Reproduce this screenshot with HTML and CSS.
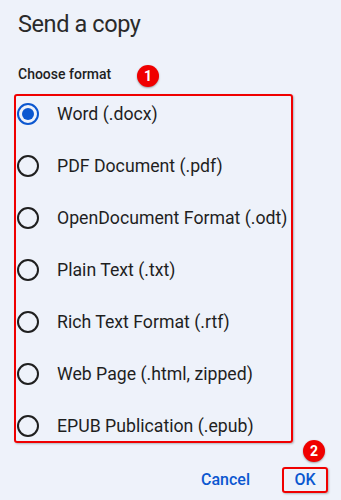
FILE: index.html
```html
<!DOCTYPE html>
<html>
<head>
<meta charset="utf-8">
<link rel="stylesheet" href="styles.css">
</head>
<body>
<div class="dialog">
  <h1 class="title">Send a copy</h1>
  <div class="label-row">
    <span class="label">Choose format</span>
    <span class="badge badge-1">1</span>
  </div>
  <div class="options">
    <div class="option"><span class="radio checked"></span><span class="opt-text">Word (.docx)</span></div>
    <div class="option"><span class="radio"></span><span class="opt-text">PDF Document (.pdf)</span></div>
    <div class="option"><span class="radio"></span><span class="opt-text">OpenDocument Format (.odt)</span></div>
    <div class="option"><span class="radio"></span><span class="opt-text">Plain Text (.txt)</span></div>
    <div class="option"><span class="radio"></span><span class="opt-text">Rich Text Format (.rtf)</span></div>
    <div class="option"><span class="radio"></span><span class="opt-text">Web Page (.html, zipped)</span></div>
    <div class="option"><span class="radio"></span><span class="opt-text">EPUB Publication (.epub)</span></div>
  </div>
  <div class="actions">
    <span class="btn">Cancel</span>
    <span class="btn btn-ok">OK<span class="badge badge-2">2</span></span>
  </div>
</div>
</body>
</html>
```
FILE: styles.css
```css
html, body {
  margin: 0;
  padding: 0;
  background: #eef2fa;
}
body {
  width: 341px;
  height: 500px;
  overflow: hidden;
  font-family: Roboto, "Noto Sans", sans-serif;
  color: #1f1f1f;
}
.dialog {
  padding: 7px 0 0 0;
}
.title {
  margin: 0 0 0 18px;
  font-size: 23.5px;
  letter-spacing: -0.4px;
  line-height: 34px;
  font-weight: 400;
  color: #2a2a2a;
}
.label-row {
  position: relative;
  margin: 23px 0 0 18px;
  height: 20px;
}
.label {
  font-size: 14px;
  line-height: 20px;
  font-weight: 500;
  color: #1f1f1f;
}
.badge {
  position: absolute;
  width: 22px;
  height: 22px;
  border-radius: 50%;
  background: #f00000;
  color: #fff;
  font-size: 14px;
  font-weight: 700;
  line-height: 22px;
  text-align: center;
  box-shadow: 0 1px 2px rgba(0,0,0,0.35);
}
.badge-1 {
  left: 119px;
  top: 1px;
}
.options {
  margin: 10px 0 0 14px;
  width: 274px;
  border: 2px solid #f00000;
  border-radius: 3px;
  box-shadow: 1px 1px 2px rgba(0,0,0,0.25);
  padding: 3px 0 0 1px;
  display: flex;
  flex-direction: column;
  gap: 22px;
  height: 342px;
  box-sizing: content-box;
}
.option {
  display: flex;
  align-items: center;
  height: 30px;
  white-space: nowrap;
}
.radio {
  flex: none;
  width: 22px;
  height: 22px;
  box-sizing: border-box;
  border: 2px solid #1f1f1f;
  border-radius: 50%;
  display: flex;
  align-items: center;
  justify-content: center;
}
.radio.checked {
  border-color: #0b57d0;
}
.radio.checked::after {
  content: "";
  width: 12px;
  height: 12px;
  border-radius: 50%;
  background: #0b57d0;
}
.opt-text {
  margin-left: 18px;
  font-size: 17.7px;
  line-height: 20px;
}
.actions {
  display: flex;
  justify-content: flex-end;
  align-items: center;
  gap: 32px;
  margin-top: 24px;
  padding-right: 13px;
}
.btn {
  position: relative;
  font-size: 16px;
  font-weight: 500;
  color: #0b57d0;
  line-height: 22px;
}
.btn-ok {
  width: 46px;
  height: 26px;
  box-sizing: border-box;
  border: 2px solid #f00000;
  border-radius: 3px;
  box-shadow: 1px 1px 2px rgba(0,0,0,0.25);
  display: flex;
  align-items: center;
  justify-content: center;
}
.badge-2 {
  left: 19px;
  top: -29px;
}
```
